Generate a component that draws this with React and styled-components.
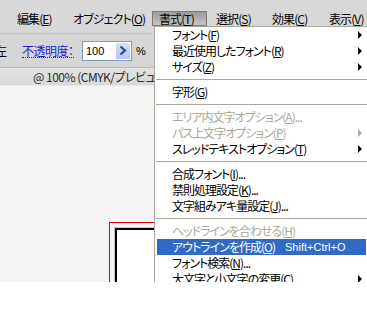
import React from "react";
import styled, { createGlobalStyle } from "styled-components";

const GlobalStyle = createGlobalStyle`
  html, body {
    margin: 0;
    padding: 0;
    background: #ffffff;
  }
  body {
    font-family: "Noto Sans CJK JP", "Liberation Sans", sans-serif;
    font-size: 12px;
    color: #000;
  }
`;

// メニュー項目の定義
const menuItems = [
  { label: "フォント", key: "F", arrow: true },
  { label: "最近使用したフォント", key: "R", arrow: true },
  { label: "サイズ", key: "Z", arrow: true },
  { sep: true },
  { label: "字形", key: "G" },
  { sep: true },
  { label: "エリア内文字オプション", key: "A", dots: true, disabled: true },
  { label: "パス上文字オプション", key: "P", arrow: true, disabled: true },
  { label: "スレッドテキストオプション", key: "T", arrow: true },
  { sep: true },
  { label: "合成フォント", key: "I", dots: true },
  { label: "禁則処理設定", key: "K", dots: true },
  { label: "文字組みアキ量設定", key: "J", dots: true },
  { sep: true },
  { label: "ヘッドラインを合わせる", key: "H", disabled: true },
  { label: "アウトラインを作成", key: "O", shortcut: "Shift+Ctrl+O", active: true },
  { label: "フォント検索", key: "N", dots: true },
  { label: "大文字と小文字の変更", key: "C", arrow: true },
];

const menuTitles = [
  { label: "編集", key: "E", width: 56 },
  { label: "オブジェクト", key: "O", width: 86 },
  { label: "書式", key: "T", width: 55, pressed: true },
  { label: "選択", key: "S", width: 56, gap: 2 },
  { label: "効果", key: "C", width: 57 },
  { label: "表示", key: "V", width: 60 },
];

const App = () => {
  return (
    <>
      <GlobalStyle />
      <Screen>
        <MenuBar>
          {menuTitles.map((t) => (
            <MenuTitle key={t.label} $width={t.width} $gap={t.gap} $pressed={t.pressed}>
              {t.label}(<u>{t.key}</u>)
            </MenuTitle>
          ))}
        </MenuBar>

        <ControlBar>
          <CutLabel>左</CutLabel>
          <OpacityLink>不透明度：</OpacityLink>
          <NumberField>
            <span>100</span>
            <StepButton>
              <svg width="8" height="9" viewBox="0 0 8 9">
                <path d="M1.5 0.5 L6 4.5 L1.5 8.5" fill="none" stroke="#2d4a8c" strokeWidth="2.2" />
              </svg>
            </StepButton>
          </NumberField>
          <Percent>%</Percent>
        </ControlBar>

        <TabRow>
          <DocTab>@ 100% (CMYK/プレビュー)</DocTab>
        </TabRow>

        <Canvas>
          <Artboard>
            <Page />
          </Artboard>
        </Canvas>

        <Popup>
          {menuItems.map((item, i) =>
            item.sep ? (
              <Separator key={i} />
            ) : (
              <Item key={i} $disabled={item.disabled} $active={item.active}>
                <Label>
                  {item.label}(<u>{item.key}</u>){item.dots ? "..." : ""}
                </Label>
                <Shortcut>{item.shortcut}</Shortcut>
                <ArrowCell>{item.arrow && <Arrow $disabled={item.disabled} />}</ArrowCell>
              </Item>
            )
          )}
        </Popup>
      </Screen>
    </>
  );
};

// スタイル
const Screen = styled.div`
  position: relative;
  width: 367px;
  height: 282px;
  overflow: hidden;
  display: flex;
  flex-direction: column;
  background: #f4f4f4;
  font-feature-settings: "palt" 1;
`;

const MenuBar = styled.div`
  height: 34px;
  box-sizing: border-box;
  display: flex;
  align-items: flex-start;
  padding: 11px 0 0 10px;
  background: #d8d8d8;
  border-bottom: 1px solid #c4c4c4;
  flex-shrink: 0;
  letter-spacing: -0.9px;
`;

const MenuTitle = styled.div`
  width: ${(p) => p.$width}px;
  margin-left: ${(p) => p.$gap || 0}px;
  height: 15px;
  box-sizing: border-box;
  padding-left: 6px;
  border: 1px solid ${(p) => (p.$pressed ? "#7a7a7a" : "transparent")};
  background: ${(p) =>
    p.$pressed ? "linear-gradient(#9c9c9c, #b4b4b4 60%, #c6c6c6)" : "transparent"};
  line-height: 13px;
  white-space: nowrap;
  flex-shrink: 0;
  u {
    text-decoration-thickness: 1px;
    text-underline-offset: 1px;
  }
`;

const ControlBar = styled.div`
  height: 34px;
  box-sizing: border-box;
  display: flex;
  align-items: center;
  background: #d6d6d6;
  border-bottom: 1px solid #bdbdbd;
  flex-shrink: 0;
`;

const CutLabel = styled.span`
  margin-left: -5px;
  width: 27px;
  font-size: 12px;
`;

const OpacityLink = styled.span`
  color: #1d1dd8;
  border-bottom: 1px dotted #1d1dd8;
  line-height: 13px;
  width: 52px;
  white-space: nowrap;
  letter-spacing: -0.5px;
`;

const NumberField = styled.div`
  margin-left: 8px;
  width: 50px;
  height: 20px;
  box-sizing: border-box;
  display: flex;
  align-items: center;
  justify-content: space-between;
  padding: 1px 1px 1px 3px;
  background: #fff;
  border: 1px solid #7f9db9;
  font-family: "Liberation Sans", Arial, sans-serif;
  font-size: 11px;
`;

const StepButton = styled.div`
  width: 14px;
  height: 16px;
  display: flex;
  align-items: center;
  justify-content: center;
  background: linear-gradient(#d4e0fb, #b4c8f3);
  border-radius: 1px;
`;

const Percent = styled.span`
  margin-left: 4px;
  font-family: "Liberation Sans", Arial, sans-serif;
  font-size: 11px;
`;

const TabRow = styled.div`
  height: 17px;
  display: flex;
  background: linear-gradient(#e2e2e2, #d8d8d8);
  border-bottom: 1px solid #e8e8e8;
  flex-shrink: 0;
`;

const DocTab = styled.div`
  padding-left: 33px;
  line-height: 17px;
  color: #2a2a2a;
  white-space: nowrap;
  letter-spacing: -0.5px;
`;

const Canvas = styled.div`
  flex: 1;
  display: flex;
  padding: 136px 0 0 109px;
  background: #f4f4f4;
`;

const Artboard = styled.div`
  flex: 1;
  display: flex;
  padding: 5px 0 0 5px;
  border-top: 1px solid #e00000;
  border-left: 1px solid #e00000;
`;

const Page = styled.div`
  flex: 1;
  background: #fff;
  border-top: 2px solid #000;
  border-left: 2px solid #000;
  box-shadow: -1px -1px 0 #c4c4c4;
`;

const Popup = styled.div`
  position: absolute;
  left: 154px;
  top: 26px;
  width: 214px;
  box-sizing: border-box;
  padding: 0 2px;
  background: #fff;
  border-top: 1px solid #aca899;
  border-left: 1px solid #aca899;
`;

const Item = styled.div`
  height: 16px;
  display: grid;
  grid-template-columns: 113px 1fr 12px;
  align-items: center;
  padding-left: 15px;
  line-height: 16px;
  white-space: nowrap;
  color: ${(p) => (p.$disabled ? "#aca899" : p.$active ? "#fff" : "#000")};
  background: ${(p) => (p.$active ? "#316ac5" : "transparent")};
  u {
    text-decoration-thickness: 1px;
    text-underline-offset: 1px;
  }
`;

const Label = styled.span`
  letter-spacing: -1px;
`;

const Shortcut = styled.span`
  font-family: "Liberation Sans", Arial, sans-serif;
  font-size: 11px;
`;

const ArrowCell = styled.span`
  display: flex;
  align-items: center;
  padding-left: 4px;
`;

const Arrow = styled.span`
  width: 0;
  height: 0;
  border-top: 4px solid transparent;
  border-bottom: 4px solid transparent;
  border-left: 4px solid ${(p) => (p.$disabled ? "#aca899" : "#000")};
`;

const Separator = styled.div`
  height: 9px;
  margin: 0 -1px 0 -1px;
  display: flex;
  align-items: center;
  &::after {
    content: "";
    flex: 1;
    height: 1px;
    background: #aca899;
  }
`;

export default App;
